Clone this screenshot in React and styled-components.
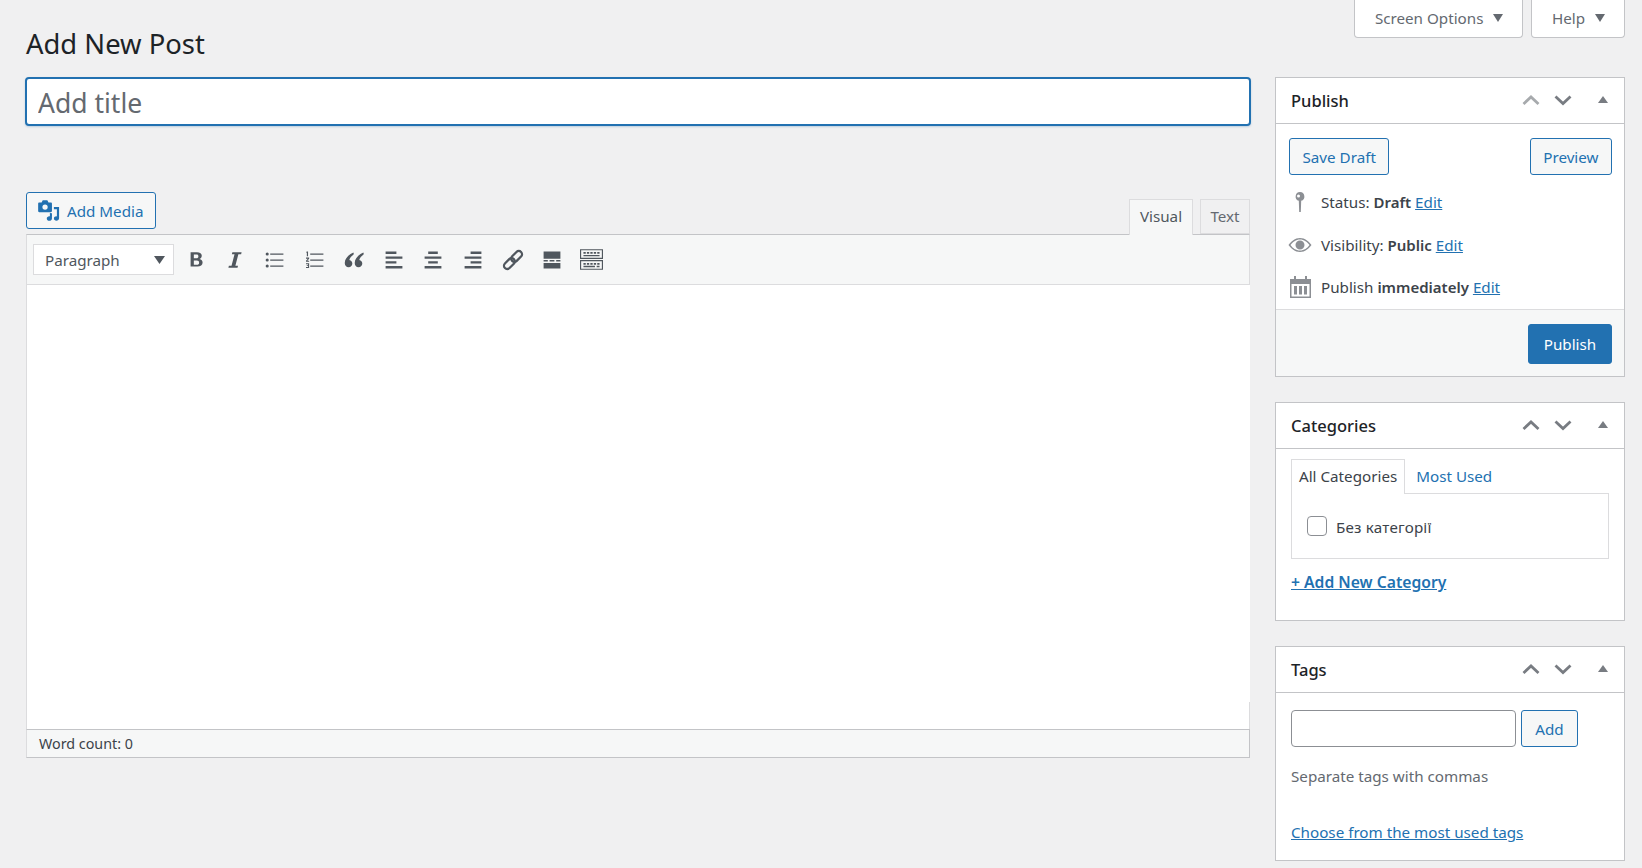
import React from 'react';
import styled, { createGlobalStyle } from 'styled-components';

const Global = createGlobalStyle`
  html, body { margin: 0; padding: 0; background: #f0f0f1; }
  body { font-family: "Noto Sans", "Open Sans", "Liberation Sans", sans-serif; font-size: 15.2px; color: #3c434a; overflow: hidden; }
  * { box-sizing: border-box; }
`;
const font = `"Noto Sans", "Open Sans", "Liberation Sans", sans-serif`;

const Page = styled.div`width: 1642px; height: 868px; overflow: hidden; padding: 0 17px 0 25px;`;
const Top = styled.header`display: flex; justify-content: space-between; height: 77px;`;
const Heading = styled.h1`margin: 27px 0 0 1px; font-size: 27.4px; line-height: 34px; font-weight: 400; color: #1d2327;`;
const ScreenLinks = styled.div`display: flex; gap: 8px; align-items: flex-start;`;
const MetaTab = styled.button`
  height: 38px; padding: 0 19.500px 2px 19.500px; display: flex; align-items: center; gap: 9.500px; background: #fff;
  border: 1px solid #c3c4c7; border-top: 0; border-radius: 0 0 4px 4px; font: 15.2px ${font}; color: #646970;
`;
const Caret = styled.i`width: 0; height: 0; border-left: 5.5px solid transparent; border-right: 5.5px solid transparent; border-top: 8px solid #646970;`;
const Columns = styled.div`display: grid; grid-template-columns: 1226px 350px; column-gap: 24px; align-items: start;`;
const TitleInput = styled.input`
  display: block; width: 100%; height: 49px; padding: 2px 11px 0; border: 2px solid #2271b1; border-radius: 4px; outline: 0;
  background: #fff; box-shadow: 0 1px 2px rgba(34,113,177,.25); font: 26.5px ${font}; color: #2c3338;
  &::placeholder { color: #646970; opacity: 1; }
`;
const MediaRow = styled.div`display: flex; justify-content: space-between; align-items: flex-end; margin-top: 66px; height: 42px; padding: 0 1px 0 1px;`;
const OutlineButton = styled.button`
  height: 37px; padding: 0 12.500px; display: inline-flex; align-items: center; gap: 6px; background: #f6f7f7;
  border: 1px solid #2271b1; border-radius: 3px; font: 15.2px ${font}; color: #2271b1;
`;
const MediaButton = styled(OutlineButton)`align-self: flex-start; width: 130px; padding: 0 10px; gap: 7px;`;
const AddTagButton = styled(OutlineButton)`width: 57px; justify-content: center; padding: 0;`;
const Tabs = styled.div`display: flex; gap: 7px; position: relative; top: 1px;`;
const Tab = styled.div`
  height: ${p => p.$active ? 36 : 35}px; width: ${p => p.$active ? 64 : 50}px; padding-bottom: ${p => p.$active ? 3 : 2}px;
  display: flex; align-items: center; justify-content: center;
  font-size: 15.2px; color: ${p => p.$active ? '#50575e' : '#646970'}; background: ${p => p.$active ? '#f6f7f7' : '#f0f0f1'};
  border: 1px solid #dcdcde; border-bottom: ${p => p.$active ? 0 : '1px solid #dcdcde'};
`;
const Editor = styled.div`margin-left: 1px; width: 1224px;`;
const Toolbar = styled.div`
  height: 51px; display: flex; align-items: center; padding: 0 0 0 6px; background: #f6f7f7;
  border: 1px solid #dcdcde; border-top-color: #c3c4c7;
`;
const FormatSelect = styled.div`
  width: 141px; height: 31px; margin-right: 2px; display: flex; align-items: center; justify-content: space-between;
  padding: 0 8px 0 11px; background: #fff; border: 1px solid #dcdcde; font-size: 15.2px; color: #50575e;
`;
const ToolIcon = styled.span`width: 39.6px; display: flex; justify-content: center; color: #50575e; svg { display: block; }`;
const EditArea = styled.div`height: 444px; border-left: 1px solid #dcdcde; background: linear-gradient(#fff 94%, #dcdcde 94%) right / 1px 100% no-repeat, #fff;`;
const StatusBar = styled.div`
  height: 29px; padding: 0 12px; display: flex; align-items: center; background: #f6f7f7;
  border: 1px solid #c3c4c7; border-left-color: #dcdcde; font-size: 14.3px; color: #3c434a;
`;
const Side = styled.aside`display: flex; flex-direction: column; gap: 25px;`;
const Box = styled.section`background: #fff; border: 1px solid #c3c4c7; height: ${p => p.$h}px;`;
const BoxHead = styled.div`height: 46px; display: flex; align-items: center; justify-content: space-between; padding: 0 16px 0 15px; border-bottom: 1px solid #c3c4c7;`;
const BoxTitle = styled.h2`margin: 0; font-size: 16.5px; font-weight: 500; color: #1d2327;`;
const Handles = styled.div`display: flex; align-items: center; gap: 12px; position: relative; top: -1px; svg { display: block; }`;
const HandleBtn = styled.span`color: ${p => p.$dim ? '#a7aaad' : '#787c82'}; display: flex;`;
const Toggle = styled.i`margin-left: 13px; width: 0; height: 0; border-left: 5px solid transparent; border-right: 5px solid transparent; border-bottom: 7px solid #787c82;`;
const PublishBody = styled.div`padding: 14px 12px 0 13px; height: 185px;`;
const ButtonRow = styled.div`display: flex; justify-content: space-between; margin-bottom: 6px;`;
const Misc = styled.div`height: 42.5px; display: flex; align-items: center; gap: 9px; font-size: 15.2px; color: #3c434a; b { font-weight: 600; font-size: 15px; }`;
const MiscIcon = styled.span`width: 24px; margin-left: -1px; display: flex; justify-content: center; color: #8c8f94; svg { display: block; }`;
const Link = styled.a`color: #2271b1; text-decoration: underline; font-weight: ${p => p.$bold ? 600 : 400}; font-size: ${p => p.$bold ? 15.7 : 15.2}px;`;
const PublishFoot = styled.div`height: 67px; display: flex; justify-content: flex-end; align-items: flex-start; padding: 14px 12px 0; background: #f6f7f7; border-top: 1px solid #dcdcde;`;
const PrimaryButton = styled.button`width: 84px; height: 40px; background: #2271b1; border: 1px solid #2271b1; border-radius: 3px; color: #fff; font: 15.2px ${font};`;
const CatBody = styled.div`padding: 10px 15px 0;`;
const CatTabs = styled.div`display: flex; align-items: stretch; height: 35px; position: relative; z-index: 1; margin-bottom: -1px;`;
const CatTab = styled.div`
  padding: 0 7px 2px; display: flex; align-items: center; font-size: 15.2px; color: ${p => p.$active ? '#3c434a' : '#2271b1'};
  ${p => p.$active ? 'border: 1px solid #dcdcde; border-bottom: 0; background:#fff;' : 'padding-left: 11px;'}
`;
const CatPanel = styled.div`height: 66px; display: flex; align-items: center; gap: 9px; padding: 0 15px 1px; border: 1px solid #dcdcde;`;
const CatLabel = styled.span`letter-spacing: .2px; position: relative; top: 1px;`;
const Check = styled.span`width: 20px; height: 20px; border: 1px solid #8c8f94; border-radius: 4px; background: #fff;`;
const CatFoot = styled.div`margin-top: 12px;`;
const TagBody = styled.div`padding: 17px 15px 0;`;
const TagRow = styled.div`display: flex; gap: 5px;`;
const TagInput = styled.input`width: 225px; height: 37px; border: 1px solid #8c8f94; border-radius: 4px; background: #fff; outline: 0;`;
const Hint = styled.p`margin: 18px 0 35px; font-size: 15.2px; line-height: 22px; color: #646970;`;

const Chevron = ({ up }) => (
  <svg width="20" height="20" viewBox="0 0 20 20" fill="none" stroke="currentColor" strokeWidth="2.8">
    <path d={up ? 'M2.5 14l7.5-7 7.5 7' : 'M2.5 6.500l7.500 7 7.500-7'} />
  </svg>
);
const Handle = ({ dim }) => (
  <Handles>
    <HandleBtn $dim={dim}><Chevron up /></HandleBtn>
    <HandleBtn><Chevron /></HandleBtn>
    <Toggle />
  </Handles>
);

const Ic = ({ children, s = 24 }) => (
  <svg width={s} height={s} viewBox="0 0 20 20" fill="currentColor" fillRule="evenodd">{children}</svg>
);
const tools = [
  <Ic><path d="M5.500 3.500h5.300c2.500 0 4 1.100 4 3 0 1.300-.7 2.200-1.900 2.600 1.600.3 2.600 1.400 2.600 3 0 2.300-1.700 3.400-4.400 3.400H5.500zM8.200 5.500v3h2.100c1.100 0 1.700-.5 1.700-1.500s-.6-1.500-1.700-1.500zM8.200 10.400v3.600h2.500c1.300 0 1.900-.6 1.900-1.800s-.6-1.800-1.900-1.800z" /></Ic>,
  <Ic><path d="M7.800 3.500h7.700l-.4 1.800h-2.300L10.300 14.700h2.200l-.4 1.800H4.500l.4-1.800h2.200L9.600 5.300H7.400z" /></Ic>,
  <Ic><path d="M3.500 3.700a1.300 1.300 0 110 2.600 1.300 1.300 0 010-2.600zM6 4.500h11V5.600H6zM3.500 8.700a1.300 1.300 0 110 2.600 1.300 1.300 0 010-2.600zM6 9.500h11v1.100H6zM3.500 13.700a1.300 1.300 0 110 2.600 1.300 1.300 0 010-2.600zM6 14.500h11v1.100H6z" /></Ic>,
  <Ic><path d="M6 4.500h11V5.600H6zM6 9.500h11v1.100H6zM6 14.500h11v1.100H6zM3 3h1.200v3.800H3.200V4H2.700zM2.500 8h2.600v.9L3.600 10.600H5.100v.8H2.500v-.8L4 8.900H2.500zM2.500 12.700h2.600v4H2.500v-.8h1.700v-.8H3.100v-.7h1.100v-.9H2.500z" /></Ic>,
  <Ic><path d="M9.500 3.800C5.600 5.500 2.300 8.600 2.300 12.500c0 2.100 1.300 3.600 3.200 3.600 1.800 0 3.100-1.400 3.100-3.100 0-1.500-1-2.700-2.500-3 .4-1.500 1.700-3.200 3.800-4.700zM17.800 3.800c-3.900 1.700-7.200 4.800-7.200 8.700 0 2.100 1.300 3.600 3.200 3.600 1.800 0 3.100-1.400 3.100-3.100 0-1.500-1-2.700-2.500-3 .4-1.500 1.700-3.200 3.800-4.700z" /></Ic>,
  <Ic><path d="M12 5V3H3v2h9zm5 4V7H3v2h14zm-5 4v-2H3v2h9zm5 4v-2H3v2h14z" /></Ic>,
  <Ic><path d="M14 5V3H6v2h8zm3 4V7H3v2h14zm-3 4v-2H6v2h8zm3 4v-2H3v2h14z" /></Ic>,
  <Ic><path d="M17 5V3H8v2h9zm0 4V7H3v2h14zm0 4v-2H8v2h9zm0 4v-2H3v2h14z" /></Ic>,
  <Ic>
    <g fill="none" stroke="currentColor" strokeWidth="1.900" transform="rotate(-45 10 10)">
      <rect x="0.500" y="7.300" width="10.500" height="5.400" rx="2.700" />
      <rect x="9" y="7.300" width="10.500" height="5.400" rx="2.700" />
    </g>
  </Ic>,
  <Ic><path d="M3 3h14v6H3zM3 10h3.500v1.300H3zM8 10h4v1.300H8zM13.500 10H17v1.300h-3.500zM3 12.500h14V17H3z" /></Ic>,
  <Ic s={23}><path d="M0 1h20v8.500H0zm1 1v6.500h18V2zM3 3.500h2V5H3zM6 3.500h2V5H6zM9 3.500h2V5H9zM12 3.500h2V5h-2zM15 3.500h2V5h-2zM3 6h14v1.200H3zM0 10.500h20V19H0zm1 1V18h18v-6.500zM3 13h2v1.500H3zM6 13h2v1.500H6zM9 13h2v1.500H9zM12 13h2v1.500h-2zM15 13h2v1.500h-2zM3 15.500h10v1.300H3zM14.500 15.500H17v1.300h-2.500z" /></Ic>,
];

export default function App() {
  return (
    <Page>
      <Global />
      <Top>
        <Heading>Add New Post</Heading>
        <ScreenLinks>
          <MetaTab>Screen Options <Caret /></MetaTab>
          <MetaTab>Help <Caret /></MetaTab>
        </ScreenLinks>
      </Top>
      <Columns>
        <main>
          <TitleInput placeholder="Add title" />
          <MediaRow>
            <MediaButton>
              <svg width="23" height="23" viewBox="0 0 20 20" fill="currentColor"><path fillRule="evenodd" d="M5 1h4l1 2h2c.6 0 1 .4 1 1v6.500c0 .6-.4 1-1 1H2c-.6 0-1-.4-1-1V4c0-.6.4-1 1-1h2zm2 3.700a2.300 2.300 0 100 4.600 2.300 2.300 0 000-4.600z" /><path d="M19.200 7v9.800c0 1.300-1.100 2.100-2.300 2.100s-2.200-.8-2.200-1.900 1-1.900 2.200-1.900l.4.100V9h-2.600V7zM11.200 12.200l1.800.2v4.600c0 1.200-1.100 2-2.300 2s-2.200-.8-2.200-2 1-2 2.200-2l.5.100z" /></svg>
              Add Media
            </MediaButton>
            <Tabs>
              <Tab $active>Visual</Tab>
              <Tab>Text</Tab>
            </Tabs>
          </MediaRow>
          <Editor>
            <Toolbar>
              <FormatSelect>Paragraph <svg width="11" height="8" viewBox="0 0 11 8" fill="#50575e"><path d="M0 0h11L5.500 8z"/></svg></FormatSelect>
              {tools.map((icon, i) => <ToolIcon key={i}>{icon}</ToolIcon>)}
            </Toolbar>
            <EditArea />
            <StatusBar>Word count: 0</StatusBar>
          </Editor>
        </main>
        <Side>
          <Box $h={300}>
            <BoxHead><BoxTitle>Publish</BoxTitle><Handle dim /></BoxHead>
            <PublishBody>
              <ButtonRow>
                <OutlineButton>Save Draft</OutlineButton>
                <OutlineButton>Preview</OutlineButton>
              </ButtonRow>
              <Misc>
                <MiscIcon><svg width="20" height="20" viewBox="0 0 20 20" fill="currentColor"><path fillRule="evenodd" d="M10 0a4.500 4.500 0 011.200 8.800L10.800 20H9.200L8.800 8.800A4.500 4.500 0 0110 0zM8.500 2.500a1.500 1.500 0 100 3 1.500 1.500 0 000-3z"/></svg></MiscIcon>
                <span>Status: <b>Draft</b> <Link>Edit</Link></span>
              </Misc>
              <Misc>
                <MiscIcon><svg width="24" height="24" viewBox="0 0 24 24" fill="currentColor"><path fillRule="evenodd" d="M12 5c5 0 9 3.500 11.500 7C21 15.500 17 19 12 19S3 15.500.5 12C3 8.500 7 5 12 5zm0 1.500C8 6.500 4.500 9 2.500 12c2 3 5.500 5.500 9.500 5.500s7.500-2.500 9.500-5.500c-2-3-5.500-5.500-9.500-5.500zM12 7.500a4.500 4.500 0 110 9 4.500 4.500 0 010-9z"/></svg></MiscIcon>
                <span>Visibility: <b>Public</b> <Link>Edit</Link></span>
              </Misc>
              <Misc>
                <MiscIcon><svg width="21" height="22" viewBox="0 0 21 22" fill="currentColor"><path fillRule="evenodd" d="M4 0h2v3h9V0h2v3h4v19H0V3h4zM1.500 8v12.500h18V8zM4 10h3v8.500H4zM9 10h3v8.500H9zM14 10h3v8.500h-3z"/></svg></MiscIcon>
                <span>Publish <b>immediately</b> <Link>Edit</Link></span>
              </Misc>
            </PublishBody>
            <PublishFoot><PrimaryButton>Publish</PrimaryButton></PublishFoot>
          </Box>
          <Box $h={219}>
            <BoxHead><BoxTitle>Categories</BoxTitle><Handle /></BoxHead>
            <CatBody>
              <CatTabs>
                <CatTab $active>All Categories</CatTab>
                <CatTab>Most Used</CatTab>
              </CatTabs>
              <CatPanel><Check /><CatLabel>Без категорії</CatLabel></CatPanel>
              <CatFoot><Link $bold>+ Add New Category</Link></CatFoot>
            </CatBody>
          </Box>
          <Box $h={215}>
            <BoxHead><BoxTitle>Tags</BoxTitle><Handle /></BoxHead>
            <TagBody>
              <TagRow><TagInput /><AddTagButton>Add</AddTagButton></TagRow>
              <Hint>Separate tags with commas</Hint>
              <Link>Choose from the most used tags</Link>
            </TagBody>
          </Box>
        </Side>
      </Columns>
    </Page>
  );
}
